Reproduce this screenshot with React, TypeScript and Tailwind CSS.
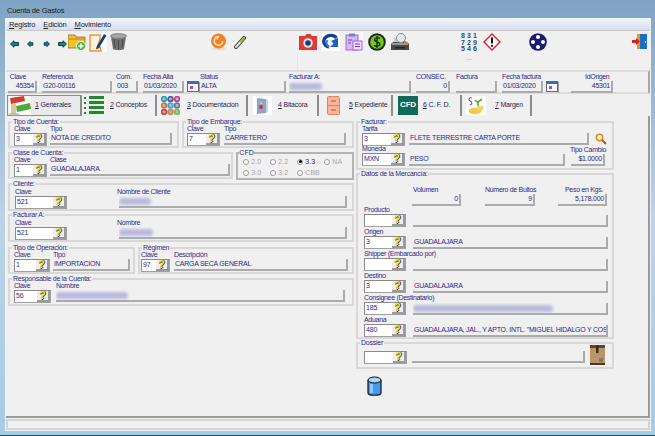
import type { ReactNode } from "react";

const font = { fontFamily: '"Liberation Sans", Arial, sans-serif' };

function Group({ legend, className, children }: { legend: string; className: string; children: ReactNode }) {
  return (
    <div className={`relative border-2 border-[#d8d8d8] ${className}`}>
      <span className="absolute top-[-4px] left-[2px] bg-[#f0f0f0] px-px text-[7px] leading-[6px] tracking-[-0.25px] whitespace-nowrap text-[#2a2a88]">{legend}</span>
      {children}
    </div>
  );
}

function Label({ children, className = "" }: { children: ReactNode; className?: string }) {
  return <div className={`h-[8px] text-[7px] leading-[8px] tracking-[-0.3px] whitespace-nowrap text-[#2a2a88] ${className}`}>{children}</div>;
}

function Lookup({ value = "", w }: { value?: string; w: string }) {
  return (
    <div className={`flex h-[13px] shrink-0 border border-t-[#8a8a8a] border-r-[#a0a0a0] border-b-[#a0a0a0] border-l-[#8a8a8a] bg-white ${w}`}>
      <div className="flex-1 pl-px text-[7px] leading-[9px] tracking-[-0.2px] text-[#2a2a88]">{value}</div>
      <div className="flex w-[13px] items-center justify-center border-r-2 border-b-2 border-[#9a9a9a] bg-[#eeeeee] text-[10px] leading-[10px] font-bold text-[#f4ee20] [text-shadow:1px_0_0_#333,0_1px_0_#333]">?</div>
    </div>
  );
}

function Field({ text, w, right, blur }: { text?: string; w: string; right?: boolean; blur?: string }) {
  return (
    <div className={`flex h-[12px] shrink-0 items-center overflow-hidden border-r-2 border-b-2 border-[#ababab] text-[7px] tracking-[-0.25px] whitespace-nowrap text-[#2a2a88] ${right ? "justify-end pr-px" : "pl-px"} ${w}`}>
      {text}
      {blur && <div className={`h-[7px] rounded-sm bg-[#b9b9dc] blur-[1.5px] ${blur}`} />}
    </div>
  );
}

function Calendar() {
  return (
    <svg width="13" height="12" viewBox="0 0 13 12" className="shrink-0">
      <rect x="0" y="0" width="12" height="11" fill="#5a6a72" />
      <rect x="1" y="2" width="10" height="8" fill="#fff" />
      <rect x="1" y="1" width="10" height="2" fill="#3b6fb0" />
      <rect x="3" y="5" width="3" height="3" fill="#c23cc2" />
      <rect x="12" y="1" width="1" height="11" fill="#999" />
    </svg>
  );
}

function Arrow({ dir, kind }: { dir: "l" | "r"; kind: "big" | "small" }) {
  const pts = kind === "big" ? "0.500,4 4,0.800 4,2.500 8.500,2.500 8.500,5.500 4,5.500 4,7.200" : "1.500,4 4.200,1.500 4.200,2.800 6.800,2.800 6.800,5.200 4.200,5.200 4.200,6.500";
  return (
    <svg width="9" height="8" viewBox="0 0 9 8" className={dir === "r" ? "-scale-x-100" : ""}>
      <polygon points={pts} fill="#0f8f86" stroke="#0b3a44" strokeWidth="1" />
    </svg>
  );
}

function FolderIcon() {
  return (
    <svg width="18" height="18" viewBox="0 0 18 18">
      <path d="M0 2h7l1 2h9v11H0z" fill="#f2c230" stroke="#7c5c10" strokeWidth=".7" />
      <rect x="1" y="5" width="15" height="2" fill="#e89a20" />
      <circle cx="13" cy="13" r="4.600" fill="#4fb848" stroke="#fff" />
      <path d="M13 10.500v5M10.500 13h5" stroke="#fff" strokeWidth="1.500" />
    </svg>
  );
}

function NoteIcon() {
  return (
    <svg width="18" height="19" viewBox="0 0 18 19">
      <rect width="18" height="19" fill="#fff" />
      <path d="M1 2h10v4l-3 9 3-1 1 4H1z" fill="#fdf3e2" stroke="#f0922c" strokeWidth="1.400" />
      <path d="M8 13L15 1l2.500 1.500L10 15l-3 1.500z" fill="#123f8f" />
    </svg>
  );
}

function TrashIcon() {
  return (
    <svg width="17" height="18" viewBox="0 0 17 18">
      <ellipse cx="8.500" cy="3" rx="8" ry="2.400" fill="#a8a8a8" stroke="#555" strokeWidth=".6" />
      <path d="M1 4l2 12c.5 1.500 10.500 1.500 11 0l2-12c-2 2-13 2-15 0z" fill="#6f6f6f" />
      <path d="M4 6l1 9M8.500 7v9M13 6l-1 9" stroke="#333" strokeWidth=".7" />
    </svg>
  );
}

function SwirlIcon() {
  return (
    <svg width="17" height="18" viewBox="0 0 17 18">
      <ellipse cx="8.500" cy="16" rx="7" ry="1.500" fill="#ddd" />
      <circle cx="8.500" cy="8" r="7.500" fill="#f4801f" />
      <circle cx="8.500" cy="8" r="4.200" fill="none" stroke="#ffe3c4" strokeWidth="1.600" strokeDasharray="20 7" />
      <path d="M5 3l4 1-2 3z" fill="#ffe3c4" />
    </svg>
  );
}

function ChainIcon() {
  return (
    <svg width="14" height="15" viewBox="0 0 14 15">
      <path d="M3 12L11 3" stroke="#333" strokeWidth="4" strokeLinecap="round" />
      <path d="M3 12L11 3" stroke="#e9ecc8" strokeWidth="2" strokeLinecap="round" />
      <path d="M8 6.500L11 3" stroke="#9cb23c" strokeWidth="2.400" strokeLinecap="round" />
    </svg>
  );
}

function CameraIcon() {
  return (
    <svg width="18" height="18" viewBox="0 0 18 18">
      <path d="M0 3h6l1.500-2h4L13 3h5v14H0z" fill="#dc3c34" />
      <circle cx="9" cy="10" r="4.800" fill="#dfe3e6" />
      <circle cx="9" cy="10" r="2.800" fill="#1f3f66" />
    </svg>
  );
}

function RefreshIcon() {
  return (
    <svg width="18" height="18" viewBox="0 0 18 18">
      <rect width="18" height="18" fill="#fff" />
      <path d="M7 14C2 13 0.500 8 3 5c3-3.500 9-3.500 11.500 0" fill="none" stroke="#123f8f" strokeWidth="3.400" />
      <path d="M7 14C4.500 12 4 9 5.500 7" fill="none" stroke="#2f7fe0" strokeWidth="2" />
      <path d="M16 5v9H8l3.500-3.500L9 8z" fill="#1d5fc0" />
    </svg>
  );
}

function ClipboardIcon() {
  return (
    <svg width="18" height="18" viewBox="0 0 18 18">
      <rect width="18" height="18" fill="#fff" />
      <rect x="1" y="2" width="12" height="15" fill="#d9b8f2" stroke="#9a5fd8" />
      <rect x="4" y="0.500" width="6" height="3" fill="#6f7fe0" />
      <rect x="8" y="8" width="9" height="9" fill="#efe2fb" stroke="#9a5fd8" />
      <path d="M3 7h4M3 10h3M10 11h5M10 13.500h5" stroke="#6a3fc0" />
    </svg>
  );
}

function DollarIcon() {
  return (
    <svg width="18" height="18" viewBox="0 0 18 18">
      <circle cx="9" cy="9" r="8.800" fill="#1e2a1e" />
      <circle cx="9" cy="9" r="6.800" fill="#7ac81e" />
      <path d="M12 5.500c-2-1.200-5.500-1-5.500 1.300 0 2.800 5.500 1.600 5.500 4.400 0 2.300-3.500 2.500-6 1.300M9 3v12" fill="none" stroke="#14300c" strokeWidth="1.400" />
    </svg>
  );
}

function PrinterIcon() {
  return (
    <svg width="18" height="18" viewBox="0 0 18 18">
      <path d="M3 5h3v5H3z" fill="#c8c8c8" />
      <path d="M0 11l2-2h14l2 2v6H0z" fill="#4a4a4a" />
      <rect x="1" y="10" width="16" height="2" fill="#9a9a9a" />
      <circle cx="10" cy="5" r="4.500" fill="#dfeaf2" stroke="#8a8a8a" />
      <path d="M13 8l4 3" stroke="#d8842c" strokeWidth="2" />
      <rect x="4" y="14" width="10" height="1.500" fill="#222" />
    </svg>
  );
}

function NumbersIcon() {
  return (
    <div className="grid h-[18px] w-[18px] grid-cols-3 overflow-hidden text-center text-[7px] leading-[6.500px] font-bold text-[#2c4a80]">
      {["8", "3", "1", "7", "2", "9", "5", "4", "6"].map((n, i) => (
        <span key={i}>{n}</span>
      ))}
    </div>
  );
}

function DiamondIcon() {
  return (
    <svg width="18" height="18" viewBox="0 0 18 18">
      <path d="M9 1l8 8-8 8-8-8z" fill="#fff" stroke="#e02020" strokeWidth="1.400" />
      <path d="M9 4.500v6" stroke="#111" strokeWidth="2" />
      <circle cx="9" cy="12.800" r="1.100" fill="#111" />
    </svg>
  );
}

function NavIcon() {
  return (
    <svg width="18" height="18" viewBox="0 0 18 18">
      <circle cx="9" cy="9" r="8.800" fill="#1c1c6c" />
      <circle cx="9" cy="4" r="2" fill="#fff" />
      <circle cx="9" cy="14" r="2" fill="#fff" />
      <circle cx="4" cy="9" r="2" fill="#fff" />
      <circle cx="14" cy="9" r="2" fill="#fff" />
    </svg>
  );
}

function DoorIcon() {
  return (
    <svg width="16" height="15" viewBox="0 0 16 15">
      <rect x="5" y="0" width="10" height="15" fill="#1f6fc0" />
      <rect x="5" y="0" width="3" height="15" fill="#e09a2c" />
      <rect x="13" y="7" width="1" height="2" fill="#ffd040" />
      <path d="M0 6h4V4l4 3.500L4 11V9H0z" fill="#d82020" />
    </svg>
  );
}

const tabIcons: ReactNode[] = [
  <svg key="1" width="22" height="19" viewBox="0 0 22 19">
    <rect width="22" height="19" fill="#fff" />
    <path d="M1 2l14-2 1 5-14 3z" fill="#d83a2c" />
    <path d="M7 10l14-3 1 6-14 3z" fill="#4fa83c" />
    <path d="M2 8h5v10H2z" fill="#d8c89c" />
    <path d="M0 18h10" stroke="#999" />
  </svg>,
  <svg key="2" width="20" height="19" viewBox="0 0 20 19">
    <g fill="#1e8a2c">
      <rect x="0" y="1" width="2" height="2" />
      <rect x="0" y="6" width="2" height="2" />
      <rect x="0" y="11" width="2" height="2" />
      <rect x="0" y="16" width="2" height="2" />
      <rect x="5" y="0" width="15" height="3" />
      <rect x="5" y="5" width="15" height="3" />
      <rect x="5" y="10" width="15" height="3" />
      <rect x="5" y="15" width="15" height="3" />
    </g>
  </svg>,
  <svg key="3" width="19" height="19" viewBox="0 0 19 19">
    {["#2f9fc0", "#5a5a8a", "#d83a8c", "#e0702c", "#3fa8e0", "#6a7a90", "#d8402c", "#e07c4c", "#8ab83c"].map((c, i) => (
      <circle key={i} cx={3 + (i % 3) * 6.500} cy={3 + Math.floor(i / 3) * 6.500} r="2.300" fill="#9fc8e0" stroke={c} strokeWidth="1.800" />
    ))}
  </svg>,
  <svg key="4" width="19" height="19" viewBox="0 0 19 19">
    <rect width="19" height="19" fill="#fff" />
    <path d="M4 2l9 1v14l-9 1z" fill="#8aa4cc" />
    <path d="M13 3l2 1v12l-2 1z" fill="#d0d0dc" />
    <circle cx="8" cy="11" r="2" fill="#c83a2c" />
    <path d="M8 5l2 3H6z" fill="#f0c040" />
  </svg>,
  <svg key="5" width="13" height="19" viewBox="0 0 13 19">
    <rect x=".5" y=".5" width="12" height="18" rx="1" fill="#f6b59a" stroke="#e8805a" />
    <path d="M0 9.500h13" stroke="#e8805a" />
    <rect x="4" y="4" width="5" height="2" fill="#e8805a" />
    <rect x="4" y="13" width="5" height="2" fill="#e8805a" />
  </svg>,
  null,
  <svg key="7" width="20" height="19" viewBox="0 0 20 19">
    <rect width="20" height="19" fill="#fff" />
    <ellipse cx="9" cy="15" rx="6.500" ry="3.200" fill="#f2c94c" />
    <ellipse cx="14" cy="12" rx="4" ry="2.200" fill="#f2d86c" />
    <path d="M12 10V5M12 6l4-3M12 7L9 4" stroke="#5aa83c" strokeWidth="1.600" fill="none" />
    <path d="M6 2C3 1 2 4 4 5s3 3 0 4" stroke="#a83ca8" strokeWidth="1.200" fill="none" />
  </svg>,
];

const tabs = [
  { k: "1", t: " Generales", cls: "w-[75px] gap-[4px] pl-px", icon: 0 },
  { k: "2", t: " Conceptos", cls: "w-[75px] gap-[6px] pl-[2px]", icon: 1 },
  { k: "3", t: " Documentacion", cls: "w-[91px] gap-[7px] pl-[4px]", icon: 2 },
  { k: "4", t: " Bitacora", cls: "w-[71px] gap-[6px] pl-[5px]", icon: 3 },
  { k: "5", t: " Expediente", cls: "w-[74px] gap-[9px] pl-[8px]", icon: 4 },
  { k: "6", t: " C. F. D.", cls: "w-[69px] gap-[5px] pl-[5px]", icon: 5 },
  { k: "7", t: " Margen", cls: "w-[70px] gap-[9px] pl-[4px]", icon: 6 },
];

function MercRow({ label, code, text, blur, first }: { label: string; code?: string; text?: string; blur?: string; first?: boolean }) {
  return (
    <div className={first ? "" : "mt-[1px]"}>
      <Label>{label}</Label>
      <div className="flex items-end gap-[7px]">
        <Lookup value={code} w="w-[42px]" />
        <Field text={text} blur={blur} w="w-[195px]" />
      </div>
    </div>
  );
}

function Radio({ label, on }: { label: string; on?: boolean }) {
  return (
    <div className={`flex w-[27px] items-center gap-[2px] text-[7px] leading-[9px] ${on ? "text-[#2a2a88]" : "text-[#a8a8a8]"}`}>
      <span className="flex h-[6px] w-[6px] items-center justify-center rounded-full border border-[#9a9a9a] bg-white">
        {on && <span className="h-[3px] w-[3px] rounded-full bg-black" />}
      </span>
      {label}
    </div>
  );
}

export default function App() {
  return (
    <div className="flex h-[436px] w-[655px] flex-col overflow-hidden border-b border-[#12505a] bg-gradient-to-b from-[#7fa3c4] via-[#bcd3e8] to-[#a8cbe6] px-[5px] pr-[4px] pt-[3px]" style={font}>
      <div className="h-[15px] pl-[2px] text-[7.500px] leading-[15px] tracking-[-0.2px] text-[#1a1a1a]">Cuenta de Gastos</div>

      <div className="flex min-h-0 flex-1 flex-col border border-[#eef4fa] bg-[#f0f0f0]">
        {/* menu */}
        <div className="flex h-[11px] items-center gap-[8px] bg-gradient-to-b from-[#f0f3fb] to-[#d8deef] pl-[3px] text-[7.500px] tracking-[-0.2px] text-[#222]">
          <span><u>R</u>egistro</span>
          <span><u>E</u>dición</span>
          <span><u>M</u>ovimiento</span>
        </div>

        {/* toolbar */}
        <div className="relative flex h-[40px] items-start border-t border-[#c8c8c8] pt-[2px] pl-[3px]">
          <div className="mt-[7px] ml-px flex w-[58px] gap-[7px]">
            <Arrow dir="l" kind="big" />
            <Arrow dir="l" kind="small" />
            <Arrow dir="r" kind="small" />
            <Arrow dir="r" kind="big" />
          </div>
          <div className="flex gap-[3px]">
            <FolderIcon />
            <NoteIcon />
            <TrashIcon />
          </div>
          <div className="ml-[83px]"><SwirlIcon /></div>
          <div className="mt-[2px] ml-[6px]"><ChainIcon /></div>
          <div className="ml-[52px] flex gap-[5px]">
            <CameraIcon />
            <RefreshIcon />
            <ClipboardIcon />
            <DollarIcon />
            <PrinterIcon />
          </div>
          <div className="ml-[51px]"><NumbersIcon /></div>
          <div className="ml-[5px]"><DiamondIcon /></div>
          <div className="ml-[28px]"><NavIcon /></div>
          <div className="mt-[1px] ml-[85px]"><DoorIcon /></div>
          <span className="absolute top-[23px] left-[460px] text-[7px] leading-[7px] text-[#888]">...</span>
          <span className="absolute top-[22px] left-[291px] h-[18px] w-px bg-[#e4e4e4]" />
        </div>

        {/* encabezado */}
        <div className="flex h-[24px] border-y-2 border-r-2 border-y-[#dcdcdc] border-r-[#a8a8a8] pt-px pl-[2px]">
          <div className="w-[34px]"><Label>&nbsp;Clave</Label><Field text="45354" right w="w-[29px]" /></div>
          <div className="w-[74px]"><Label>Referencia</Label><Field text="G20-00116" w="w-[70px]" /></div>
          <div className="w-[27px]"><Label>Com.</Label><Field text="003" w="w-[22px]" /></div>
          <div className="w-[57px]">
            <Label>Fecha Alta</Label>
            <div className="flex gap-[3px]"><Field text="01/03/2020" w="w-[41px]" /><Calendar /></div>
          </div>
          <div className="w-[89px]"><Label>Status</Label><Field text="ALTA" w="w-[86px]" /></div>
          <div className="w-[127px]"><Label>Facturar A:</Label><Field blur="ml-[-1px] w-[33px]" w="w-[122px]" /></div>
          <div className="w-[40px]"><Label>CONSEC.</Label><Field text="0" right w="w-[34px]" /></div>
          <div className="w-[46px]"><Label>Factura</Label><Field w="w-[41px]" /></div>
          <div className="w-[69px]">
            <Label>Fecha factura</Label>
            <div className="flex gap-[3px]"><Field text="01/03/2020" w="w-[41px]" /><Calendar /></div>
          </div>
          <div><Label className="pl-[14px]">IdOrigen</Label><Field text="45301" right w="w-[42px]" /></div>
        </div>

        {/* tabs */}
        <div className="flex h-[22px] items-center pl-px">
          {tabs.map((tab, i) => (
            <div key={tab.k} className={`flex h-[21px] items-center border-r-2 border-[#8c8c8c] text-[7px] tracking-[-0.2px] whitespace-nowrap text-[#1f1f50] ${tab.cls} ${i === 0 ? "border border-r-2 border-[#8c8c8c] bg-[#eaeaea]" : ""}`}>
              {tab.icon === 5 ? (
                <span className="flex h-[19px] w-[20px] items-center justify-center bg-[#0f6b58] text-[8px] font-bold text-white">CFD</span>
              ) : (
                tabIcons[tab.icon]
              )}
              <span><u>{tab.k}</u>{tab.t}</span>
            </div>
          ))}
        </div>

        {/* cuerpo */}
        <div className="flex min-h-0 flex-1 gap-[2px] border-r-2 border-[#9a9a9a] pt-[5px] pl-[2px]">
          <div className="flex w-[346px] shrink-0 flex-col">
            <div className="flex gap-[3px]">
              <Group legend="Tipo de Cuenta:" className="h-[27px] w-[171px] pt-[2px] pl-[4px]">
                <div className="flex gap-[3px]">
                  <div><Label>Clave</Label><Lookup value="3" w="w-[33px]" /></div>
                  <div><Label>Tipo</Label><Field text="NOTA DE CREDITO" w="w-[122px]" /></div>
                </div>
              </Group>
              <Group legend="Tipo de Embarque:" className="h-[27px] w-[172px] pt-[2px] pl-[3px]">
                <div className="flex gap-[4px]">
                  <div><Label>Clave</Label><Lookup value="7" w="w-[33px]" /></div>
                  <div><Label>Tipo</Label><Field text="CARRETERO" w="w-[122px]" /></div>
                </div>
              </Group>
            </div>
            <div className="mt-[4px] flex gap-[3px]">
              <Group legend="Clase de Cuenta:" className="h-[27px] w-[226px] pt-[2px] pl-[4px]">
                <div className="flex gap-[3px]">
                  <div><Label>Clave</Label><Lookup value="1" w="w-[33px]" /></div>
                  <div><Label>Clase</Label><Field text="GUADALAJARA" w="w-[180px]" /></div>
                </div>
              </Group>
              <div className="relative h-[28px] w-[118px] border-2 border-[#b4b4b4] pt-[3px] pl-[5px]">
                <span className="absolute top-[-4px] left-[1px] bg-[#f0f0f0] text-[7px] leading-[6px] text-[#2a2a88]">CFD</span>
                <div className="flex"><Radio label="2.0" /><Radio label="2.2" /><Radio label="3.3" on /><Radio label="NA" /></div>
                <div className="mt-[2px] flex"><Radio label="3.0" /><Radio label="3.2" /><Radio label="CBB" /></div>
              </div>
            </div>
            <Group legend="Cliente:" className="mt-[3px] h-[28px] w-[346px] pt-[3px] pl-[5px]">
              <div className="flex">
                <div><Label>Clave</Label><Lookup value="521" w="w-[52px]" /></div>
                <div className="ml-[52px]">
                  <Label className="ml-[-2px]">Nombre de Cliente</Label>
                  <Field blur="ml-[-1px] w-[32px]" w="w-[228px]" />
                </div>
              </div>
            </Group>
            <Group legend="Facturar A:" className="mt-[3px] h-[28px] w-[346px] pt-[3px] pl-[5px]">
              <div className="flex">
                <div><Label>Clave</Label><Lookup value="521" w="w-[52px]" /></div>
                <div className="ml-[52px]">
                  <Label className="ml-[-2px]">Nombre</Label>
                  <Field blur="ml-[-1px] w-[34px]" w="w-[228px]" />
                </div>
              </div>
            </Group>
            <div className="mt-[5px] flex gap-[3px]">
              <Group legend="Tipo de Operación:" className="h-[27px] w-[127px] pt-[2px] pl-[4px]">
                <div className="flex gap-[3px]">
                  <div><Label>Clave</Label><Lookup value="1" w="w-[36px]" /></div>
                  <div><Label>Tipo</Label><Field text="IMPORTACION" w="w-[77px]" /></div>
                </div>
              </Group>
              <Group legend="Régimen" className="h-[27px] w-[216px] pt-[2px] pl-px">
                <div className="flex gap-[4px]">
                  <div><Label>Clave</Label><Lookup value="97" w="w-[29px]" /></div>
                  <div><Label>Descripción</Label><Field text="CARGA SECA GENERAL" w="w-[174px]" /></div>
                </div>
              </Group>
            </div>
            <Group legend="Responsable de la Cuenta:" className="mt-[4px] h-[28px] w-[346px] pt-[2px] pl-[4px]">
              <div className="flex gap-[5px]">
                <div><Label>Clave</Label><Lookup value="56" w="w-[37px]" /></div>
                <div>
                  <Label>Nombre</Label>
                  <Field blur="ml-[-1px] w-[72px]" w="w-[289px]" />
                </div>
              </div>
            </Group>
          </div>

          <div className="flex w-[258px] shrink-0 flex-col">
            <Group legend="Facturar:" className="h-[49px] w-[258px] pt-[2px] pl-[4px]">
              <Label>Tarifa</Label>
              <div className="flex items-start gap-[4px]">
                <Lookup value="3" w="w-[43px]" />
                <Field text="FLETE TERRESTRE CARTA PORTE" w="w-[180px]" />
                <svg width="12" height="12" viewBox="0 0 12 12" className="ml-[2px]">
                  <circle cx="4.500" cy="4.500" r="3.200" fill="#fdf0c0" stroke="#e08a20" strokeWidth="1.500" />
                  <path d="M7 7l4 4" stroke="#c8501c" strokeWidth="2" />
                </svg>
              </div>
              <div className="mt-[-1px] flex items-end">
                <div><Label>Moneda</Label><Lookup value="MXN" w="w-[43px]" /></div>
                <div className="ml-[4px]"><Field text="PESO" w="w-[156px]" /></div>
                <div className="ml-[6px]">
                  <Label className="ml-[-1px]">Tipo Cambio</Label>
                  <Field text="$1.0000" right w="w-[34px]" />
                </div>
              </div>
            </Group>

            <Group legend="Datos de la Mercancía:" className="mt-[3px] h-[166px] w-[258px] pl-[6px]">
              <div className="flex pt-[11px] pl-[48px]">
                <div className="w-[73px]"><Label className="pl-px">Volumen</Label><Field text="0" right w="w-[49px]" /></div>
                <div className="w-[73px]"><Label>Número de Bultos</Label><Field text="9" right w="w-[50px]" /></div>
                <div><Label className="pl-[7px]">Peso en Kgs.</Label><Field text="5,178.000" right w="w-[49px]" /></div>
              </div>
              <MercRow label="Producto" first />
              <MercRow label="Origen" code="3" text="GUADALAJARA" />
              <MercRow label="Shipper (Embarcado por)" />
              <MercRow label="Destino" code="3" text="GUADALAJARA" />
              <MercRow label="Consignee (Destinatario)" code="185" blur="ml-[-1px] w-[140px]" />
              <MercRow label="Aduana" code="480" text={'GUADALAJARA, JAL., Y APTO. INTL. "MIGUEL HIDALGO Y COS'} />
            </Group>

            <Group legend="Dossier" className="mt-[3px] h-[27px] w-[258px] pl-[6px]">
              <div className="flex items-start gap-[5px] pt-px">
                <div className="mt-[6px]"><Lookup w="w-[43px]" /></div>
                <div className="mt-[6px]"><Field w="w-[173px]" /></div>
                <svg width="15" height="20" viewBox="0 0 15 20">
                  <rect width="15" height="20" fill="#b8966a" />
                  <rect y="0" width="15" height="3" fill="#5a4630" />
                  <rect x="6" y="0" width="2.500" height="8" fill="#3a2c1c" />
                  <rect x="9" y="13" width="4" height="4" fill="#7a7a7a" />
                  <rect y="18" width="15" height="2" fill="#4a3824" />
                </svg>
              </div>
            </Group>

            <svg width="15" height="20" viewBox="0 0 15 20" className="mt-[7px] ml-[11px]">
              <path d="M1 4v13c0 3 13 3 13 0V4" fill="#3f9cf0" stroke="#111" strokeWidth="1.200" />
              <ellipse cx="7.500" cy="4" rx="6.500" ry="3" fill="#a8d8ff" stroke="#111" />
              <rect x="3" y="8" width="3" height="9" fill="#8ecbfa" />
            </svg>
          </div>
        </div>

        {/* status */}
        <div className="h-[14px] border-t-2 border-[#9a9a9a]">
          <div className="mt-px h-[11px] border-2 border-[#d4d4d4]" />
        </div>
      </div>
      <div className="h-[4px]" />
    </div>
  );
}
